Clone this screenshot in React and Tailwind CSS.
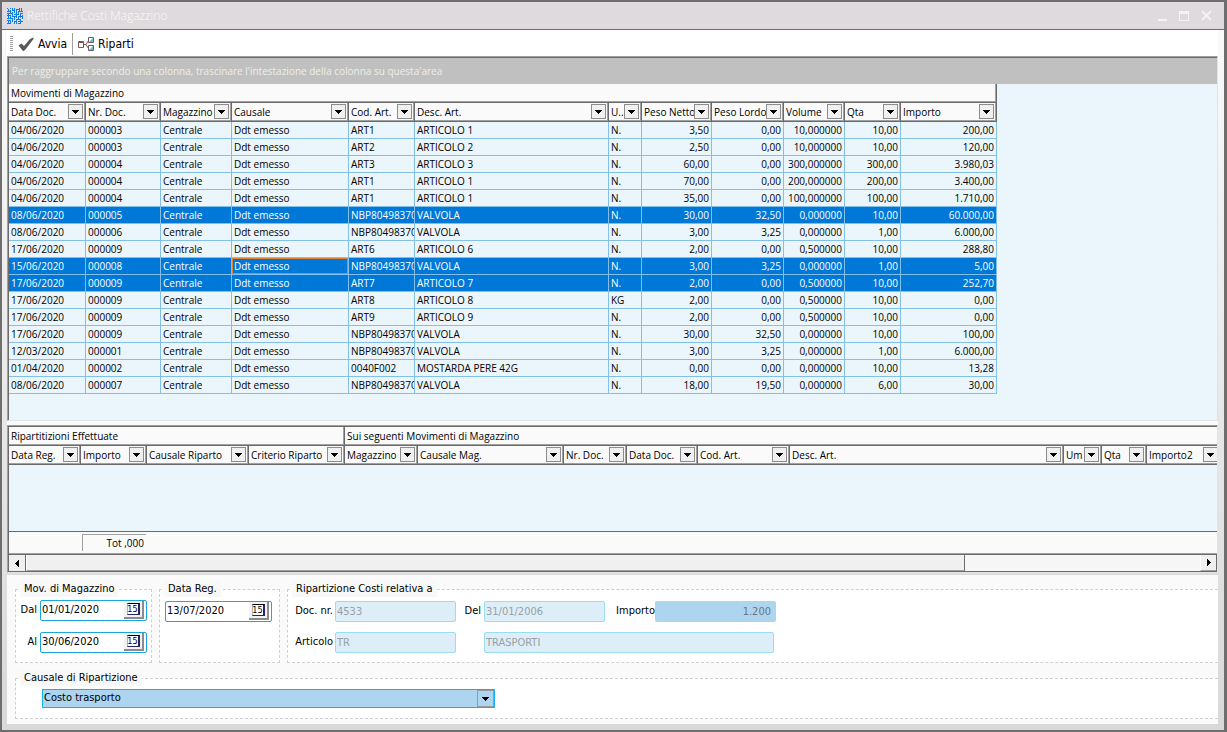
import { useState } from "react";

const movColumns = [
  { label: "Data Doc.", width: 77 },
  { label: "Nr. Doc.", width: 75 },
  { label: "Magazzino", width: 71 },
  { label: "Causale", width: 117 },
  { label: "Cod. Art.", width: 66 },
  { label: "Desc. Art.", width: 194 },
  { label: "U...", width: 33 },
  { label: "Peso Netto", width: 70, right: true },
  { label: "Peso Lordo", width: 72, right: true },
  { label: "Volume", width: 61, right: true },
  { label: "Qta", width: 56, right: true },
  { label: "Importo", width: 96, right: true },
];

const C = "Centrale";
const D = "Ddt emesso";

const movements = [
  ["04/06/2020", "000003", C, D, "ART1", "ARTICOLO 1", "N.", "3,50", "0,00", "10,000000", "10,00", "200,00"],
  ["04/06/2020", "000003", C, D, "ART2", "ARTICOLO 2", "N.", "2,50", "0,00", "10,000000", "10,00", "120,00"],
  ["04/06/2020", "000004", C, D, "ART3", "ARTICOLO 3", "N.", "60,00", "0,00", "300,000000", "300,00", "3.980,03"],
  ["04/06/2020", "000004", C, D, "ART1", "ARTICOLO 1", "N.", "70,00", "0,00", "200,000000", "200,00", "3.400,00"],
  ["04/06/2020", "000004", C, D, "ART1", "ARTICOLO 1", "N.", "35,00", "0,00", "100,000000", "100,00", "1.710,00"],
  ["08/06/2020", "000005", C, D, "NBP80498370", "VALVOLA", "N.", "30,00", "32,50", "0,000000", "10,00", "60.000,00"],
  ["08/06/2020", "000006", C, D, "NBP80498370", "VALVOLA", "N.", "3,00", "3,25", "0,000000", "1,00", "6.000,00"],
  ["17/06/2020", "000009", C, D, "ART6", "ARTICOLO 6", "N.", "2,00", "0,00", "0,500000", "10,00", "288,80"],
  ["15/06/2020", "000008", C, D, "NBP80498370", "VALVOLA", "N.", "3,00", "3,25", "0,000000", "1,00", "5,00"],
  ["17/06/2020", "000009", C, D, "ART7", "ARTICOLO 7", "N.", "2,00", "0,00", "0,500000", "10,00", "252,70"],
  ["17/06/2020", "000009", C, D, "ART8", "ARTICOLO 8", "KG", "2,00", "0,00", "0,500000", "10,00", "0,00"],
  ["17/06/2020", "000009", C, D, "ART9", "ARTICOLO 9", "N.", "2,00", "0,00", "0,500000", "10,00", "0,00"],
  ["17/06/2020", "000009", C, D, "NBP80498370", "VALVOLA", "N.", "30,00", "32,50", "0,000000", "10,00", "100,00"],
  ["12/03/2020", "000001", C, D, "NBP80498370", "VALVOLA", "N.", "3,00", "3,25", "0,000000", "1,00", "6.000,00"],
  ["01/04/2020", "000002", C, D, "0040F002", "MOSTARDA PERE 42G", "N.", "0,00", "0,00", "0,000000", "10,00", "13,28"],
  ["08/06/2020", "000007", C, D, "NBP80498370", "VALVOLA", "N.", "18,00", "19,50", "0,000000", "6,00", "30,00"],
];

const ripColumns = [
  { label: "Data Reg.", width: 72 },
  { label: "Importo", width: 66 },
  { label: "Causale Riparto", width: 102 },
  { label: "Criterio Riparto", width: 96 },
  { label: "Magazzino", width: 73 },
  { label: "Causale Mag.", width: 146 },
  { label: "Nr. Doc.", width: 63 },
  { label: "Data Doc.", width: 71 },
  { label: "Cod. Art.", width: 92 },
  { label: "Desc. Art.", width: 274 },
  { label: "Um", width: 38 },
  { label: "Qta", width: 45 },
  { label: "Importo2", width: 74 },
];

function Columns({ columns }) {
  return (
    <colgroup>
      {columns.map((col, i) => (
        <col key={i} style={{ width: col.width }} />
      ))}
    </colgroup>
  );
}

function HeaderCell({ label }) {
  return (
    <th scope="col" className="h-[19px] border-r border-b border-[#6b6b6b] p-0 font-normal">
      <div className="flex h-[18px] items-center border-r border-b border-[#a0a0a0] bg-[#fafafa] pr-px pl-[2px]">
        <span className="min-w-0 flex-1 whitespace-nowrap text-left">{label}</span>
        <button
          type="button"
          aria-label={`Filtra ${label}`}
          className="flex h-[15px] w-[15px] shrink-0 items-center justify-center border border-[#8c8c8c] bg-[#f0f0f0]"
        >
          <svg width="7" height="4" viewBox="0 0 7 4" shapeRendering="crispEdges">
            <path d="M0 0h7v1H6v1H5v1H4v1H3V3H2V2H1V1H0z" />
          </svg>
        </button>
      </div>
    </th>
  );
}

function GroupCell({ label, span }) {
  return (
    <th colSpan={span} scope="colgroup" className="h-[19px] border-r border-b border-[#6b6b6b] p-0 font-normal">
      <div className="flex h-[18px] items-center border-r border-b border-[#a0a0a0] bg-[#fafafa] pl-[2px]">{label}</div>
    </th>
  );
}

function MovimentiGrid() {
  const [selected, setSelected] = useState([5, 8, 9]);

  const toggle = (index) => {
    setSelected(selected.includes(index) ? selected.filter((i) => i !== index) : [...selected, index]);
  };

  return (
    <section className="h-[365px] overflow-hidden border border-t-[#a0a0a0] border-l-[#a0a0a0] border-r-[#e3e3e3] border-b-[#e3e3e3]">
      <div className="h-full border-t border-l border-[#6b6b6b] bg-[#eaf5fc]">
        <div className="flex h-[26px] items-center bg-[#c0c0c0] pl-[3px] text-[#eeeee6]">
          Per raggruppare secondo una colonna, trascinare l'intestazione della colonna su questa'area
        </div>
        <table className="w-[988px] table-fixed border-separate border-spacing-0">
          <Columns columns={movColumns} />
          <thead>
            <tr>
              <GroupCell label="Movimenti di Magazzino" span={12} />
            </tr>
            <tr>
              {movColumns.map((col) => (
                <HeaderCell key={col.label} label={col.label} />
              ))}
            </tr>
          </thead>
          <tbody>
            {movements.map((row, r) => (
              <tr
                key={r}
                onClick={() => toggle(r)}
                className={selected.includes(r) ? "bg-[#0078d7] text-white" : "text-black"}
              >
                {row.map((value, c) => (
                  <td
                    key={c}
                    className={`h-[17px] overflow-hidden border-r border-b border-[#84bfe8] px-[2px] py-0 leading-4 whitespace-nowrap ${
                      movColumns[c].right ? "text-right" : "text-left"
                    } ${r === 8 && c === 3 ? "shadow-[inset_0_0_0_1px_#e08030]" : ""}`}
                  >
                    {value}
                  </td>
                ))}
              </tr>
            ))}
          </tbody>
        </table>
      </div>
    </section>
  );
}

function RipartizioniGrid() {
  return (
    <section className="mt-1 overflow-hidden border border-t-[#a0a0a0] border-l-[#a0a0a0] border-r-[#e3e3e3] border-b-[#e3e3e3]">
      <div className="border-t border-l border-[#6b6b6b]">
        <div className="h-[104px] overflow-hidden bg-[#eaf5fc]">
          <table className="w-[1212px] table-fixed border-separate border-spacing-0">
            <Columns columns={ripColumns} />
            <thead>
              <tr>
                <GroupCell label="Ripartitizioni Effettuate" span={4} />
                <GroupCell label="Sui seguenti Movimenti di Magazzino" span={9} />
              </tr>
              <tr>
                {ripColumns.map((col) => (
                  <HeaderCell key={col.label} label={col.label} />
                ))}
              </tr>
            </thead>
          </table>
        </div>
        <div className="h-[23px] border-t border-b border-t-[#6b6b6b] border-b-[#a0a0a0] bg-[#fafafa] pt-[2px] pl-[73px]">
          <div className="h-[17px] w-[64px] border-t border-l border-[#a0a0a0] pr-[2px] text-right leading-4">Tot ,000</div>
        </div>
        <div className="flex h-[18px] border-t border-b border-[#6b6b6b] bg-[#f6f6f6]">
          <button
            type="button"
            aria-label="Scorri a sinistra"
            className="flex w-[17px] items-center justify-center border-r border-[#6b6b6b] bg-[#f0f0f0]"
          >
            <svg width="4" height="7" viewBox="0 0 4 7" shapeRendering="crispEdges">
              <path d="M4 0v7H3V6H2V5H1V4H0V3h1V2h1V1h1V0z" />
            </svg>
          </button>
          <div className="flex-1">
            <div className="h-full w-4/5 border-r border-b border-l border-r-[#6b6b6b] border-b-[#a0a0a0] border-l-white bg-[#f0f0f0]" />
          </div>
          <button
            type="button"
            aria-label="Scorri a destra"
            className="flex w-[17px] items-center justify-center border-r border-b border-l border-r-[#6b6b6b] border-b-[#a0a0a0] border-l-white bg-[#f0f0f0]"
          >
            <svg width="4" height="7" viewBox="0 0 4 7" shapeRendering="crispEdges">
              <path d="M0 0v7h1V6h1V5h1V4h1V3H3V2H2V1H1V0z" />
            </svg>
          </button>
        </div>
      </div>
    </section>
  );
}

function DateField({ id, value }) {
  return (
    <div className="flex h-[21px] w-[107px] rounded-[2px] border border-[#1ba7dc] bg-white">
      <input id={id} defaultValue={value} className="h-[17px] w-0 flex-1 pl-px outline-none" />
      <button
        type="button"
        aria-label="Apri calendario"
        className="mr-[2px] flex h-[18px] w-[20px] items-center justify-center border-r-2 border-b-2 border-[#8c8c8c] bg-[#f2f2f2]"
      >
        <span className="flex h-[12px] w-[13px] items-center justify-center border-t border-r-2 border-b border-l border-t-black border-r-[#24246c] border-b-[#24246c] border-l-[#b0b0b0] bg-white text-[9px] leading-none">
          15
        </span>
      </button>
    </div>
  );
}

function Group({ title, className, children }) {
  return (
    <fieldset className={`border border-dashed border-[#cfcfcf] bg-white ${className}`}>
      <legend className="ml-[4px] h-4 bg-[#f8f8f8] px-[4px] leading-4">{title}</legend>
      {children}
    </fieldset>
  );
}

const disabledInput = "h-[21px] rounded-[2px] border border-[#9adcf0] bg-[#ddeef8] px-px text-[#98a0a6]";

function Parametri() {
  return (
    <form className="flex-1 border-t border-[#d9d9d9] bg-[#fafafa] pt-[6px] pl-[8px]">
      <div className="flex gap-[7px]">
        <Group title="Mov. di Magazzino" className="h-[82px] w-[137px]">
          <div className="mt-[3px] flex items-center justify-end gap-[3px] pr-[4px]">
            <label htmlFor="dal">Dal</label>
            <DateField id="dal" value="01/01/2020" />
          </div>
          <div className="mt-[11px] flex items-center justify-end gap-[3px] pr-[4px]">
            <label htmlFor="al">Al</label>
            <DateField id="al" value="30/06/2020" />
          </div>
        </Group>
        <Group title="Data Reg." className="h-[82px] w-[121px]">
          <div className="mt-[4px] pl-[5px]">
            <DateField id="dataReg" value="13/07/2020" />
          </div>
        </Group>
        <Group title="Ripartizione Costi relativa a" className="h-[82px] flex-1 border-r-0">
          <div className="mt-[4px] flex items-center">
            <label htmlFor="doc" className="w-[47px] pr-[2px] text-right">Doc. nr.</label>
            <input id="doc" disabled defaultValue="4533" className={`w-[121px] ${disabledInput}`} />
            <label htmlFor="del" className="w-[28px] pr-[3px] text-right">Del</label>
            <input id="del" disabled defaultValue="31/01/2006" className={`w-[121px] ${disabledInput}`} />
            <label htmlFor="importo" className="w-[50px] text-right">Importo</label>
            <input
              id="importo"
              disabled
              defaultValue="1.200"
              className="h-[21px] w-[121px] rounded-[2px] bg-[#add5f0] pr-[5px] text-right text-[#6c7680]"
            />
          </div>
          <div className="mt-[10px] flex items-center">
            <label htmlFor="articolo" className="w-[47px] pr-[2px] text-right">Articolo</label>
            <input id="articolo" disabled defaultValue="TR" className={`w-[121px] ${disabledInput}`} />
            <input
              aria-label="Descrizione articolo"
              disabled
              defaultValue="TRASPORTI"
              className={`ml-[28px] w-[290px] ${disabledInput}`}
            />
          </div>
        </Group>
      </div>
      <Group title="Causale di Ripartizione" className="mt-[7px] h-[49px] border-r-0">
        <div className="relative mt-[3px] ml-[26px] w-[453px]">
          <select
            aria-label="Causale di Ripartizione"
            className="h-[19px] w-full appearance-none border border-[#12b0ee] bg-[#add5f0] pl-px"
          >
            <option>Costo trasporto</option>
          </select>
          <span className="pointer-events-none absolute top-px right-px flex h-[17px] w-[17px] items-center justify-center border border-[#9a9a9a]">
            <svg width="7" height="4" viewBox="0 0 7 4" shapeRendering="crispEdges">
              <path d="M0 0h7v1H6v1H5v1H4v1H3V3H2V2H1V1H0z" />
            </svg>
          </span>
        </div>
      </Group>
    </form>
  );
}

function TitleBar() {
  return (
    <header className="flex h-[28px] items-center border-b border-[#6b6b6b] bg-[#dedade] pr-[12px] pl-[5px] text-[#fafafa]">
      <svg width="16" height="16" viewBox="0 0 16 16" fill="none" stroke="#0f7be0" shapeRendering="crispEdges">
        <path d="M0 .5h1M3 .5h1M1.500 1v3M0 3.500h4M3.500 2v4M5.500 0v3M5 2.500h3M7.500 0v5M9.500 1v4M9 1.500h4M12.500 0v3M14.500 0v4M11 3.500h5M11.500 3v3M0 5.500h6M5.500 4v4M7 6.500h5M9.500 5v5M13.500 5v5M13 5.500h3M1.500 5v5M0 7.500h4M3.500 7v4M5 8.500h4M7.500 8v4M11 8.500h5M11.500 8v4M0 10.500h6M5.500 10v4M9 11.500h5M9.500 11v5M1.500 12v4M0 12.500h4M3.500 13v3M7 13.500h3M7.500 13v3M11 13.500h5M13.500 12v4M11 15.500h3M0 15.500h3M15.500 7v4" />
      </svg>
      <h1 className="ml-[4px] flex-1 text-[12px]">Rettifiche Costi Magazzino</h1>
      <div className="flex items-center gap-[12px]">
        <button type="button" aria-label="Riduci a icona" className="flex h-[10px] w-[9px] items-end">
          <span className="h-[2px] w-full bg-[#f4f2f4]" />
        </button>
        <button type="button" aria-label="Ingrandisci" className="h-[10px] w-[10px] border border-t-[3px] border-[#f4f2f4]" />
        <button type="button" aria-label="Chiudi">
          <svg width="11" height="11" viewBox="0 0 11 11" stroke="#f4f2f4" strokeWidth="2">
            <path d="M1 1l9 9M10 1l-9 9" />
          </svg>
        </button>
      </div>
    </header>
  );
}

function Toolbar() {
  return (
    <nav className="flex h-[26px] items-center bg-white pt-px pl-[3px] text-[12px]">
      <svg width="4" height="16" viewBox="0 0 4 16" fill="#a0a0a0" shapeRendering="crispEdges">
        <path d="M0 0h3v1H0zM0 2h3v1H0zM0 4h3v1H0zM0 6h3v1H0zM0 8h3v1H0zM0 10h3v1H0zM0 12h3v1H0zM0 14h3v1H0z" />
      </svg>
      <button type="button" className="ml-[4px] flex items-center gap-[4px]">
        <svg width="16" height="16" viewBox="0 0 16 16" fill="#55585a">
          <path d="M.5 9.500L3.500 7.500 6 10 12 3l3.500-1.500V3L7 14 5.500 15H5z" />
        </svg>
        Avvia
      </button>
      <span className="mx-[5px] h-[22px] w-px bg-[#a0a0a0]" />
      <button type="button" className="flex items-center gap-[4px]">
        <svg width="16" height="16" viewBox="0 0 16 16" fill="none" stroke="#7a5650">
          <path d="M.5 5.500h5v6h-5zM0 6.500h6M6 8.500h2l2.500-4M8 8.500l2.500 4" />
          <path fill="#fff" d="M10.500 1.500h5v5h-5zM10.500 9.500h5v5h-5z" />
          <path fill="#4fc4ea" stroke="none" d="M15 2v4h-4zM15 10v4h-4z" />
        </svg>
        Riparti
      </button>
    </nav>
  );
}

function App() {
  return (
    <div className="flex min-h-screen flex-col border-2 border-r-[3px] border-[#6e6e6e] font-['DejaVu_Sans_Condensed','DejaVu_Sans',sans-serif] text-[11px] text-black">
      <div className="font-['Open_Sans',sans-serif] font-light">
        <TitleBar />
      </div>
      <main className="flex flex-1 flex-col border-b-[6px] border-[#d9d9d9] bg-linear-to-b from-[#fafafa] to-[#d9d9d9] pr-[6px] pl-[5px]">
        <Toolbar />
        <div className="bg-[#fafafa] font-['Open_Sans',sans-serif] text-[10px] leading-4">
          <MovimentiGrid />
          <RipartizioniGrid />
        </div>
        <div className="mt-px flex flex-1 flex-col">
          <Parametri />
        </div>
      </main>
    </div>
  );
}

export default App;
